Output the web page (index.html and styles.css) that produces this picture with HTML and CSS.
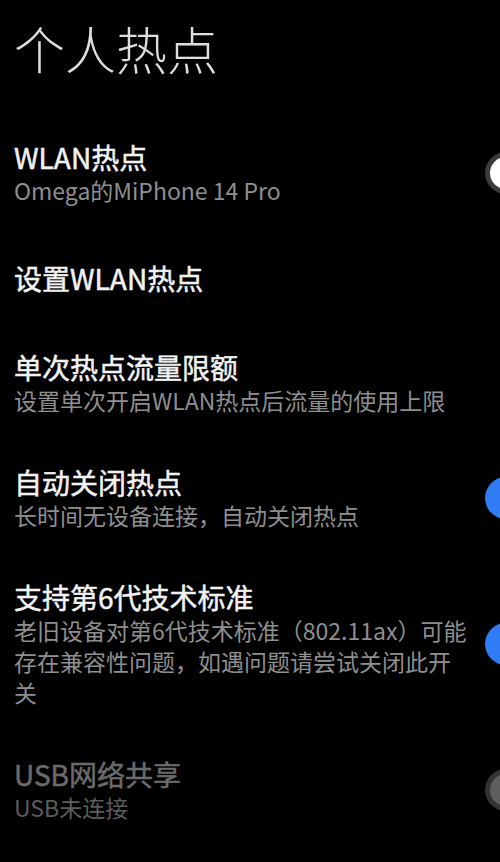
FILE: index.html
```html
<!DOCTYPE html>
<html lang="zh-CN">
<head>
<meta charset="utf-8">
<title>个人热点</title>
<link rel="stylesheet" href="styles.css">
</head>
<body>
<div class="page">
  <h1 class="header">个人热点</h1>
  <div class="list">
    <div class="item">
      <div class="text">
        <div class="title">WLAN热点</div>
        <div class="sub">Omega的MiPhone 14 Pro</div>
      </div>
      <div class="switch off"><span class="knob"></span></div>
    </div>
    <div class="item single">
      <div class="text">
        <div class="title">设置WLAN热点</div>
      </div>
    </div>
    <div class="item">
      <div class="text">
        <div class="title">单次热点流量限额</div>
        <div class="sub">设置单次开启WLAN热点后流量的使用上限</div>
      </div>
    </div>
    <div class="item">
      <div class="text">
        <div class="title">自动关闭热点</div>
        <div class="sub">长时间无设备连接，自动关闭热点</div>
      </div>
      <div class="switch on"><span class="knob"></span></div>
    </div>
    <div class="item">
      <div class="text">
        <div class="title">支持第6代技术标准</div>
        <div class="sub">老旧设备对第6代技术标准（802.11ax）可能存在兼容性问题，如遇问题请尝试关闭此开关</div>
      </div>
      <div class="switch on"><span class="knob"></span></div>
    </div>
    <div class="item disabled">
      <div class="text">
        <div class="title">USB网络共享</div>
        <div class="sub">USB未连接</div>
      </div>
      <div class="switch off"><span class="knob"></span></div>
    </div>
  </div>
</div>
</body>
</html>
```
FILE: styles.css
```css
html, body {
  margin: 0;
  padding: 0;
  background: #000;
  height: 100%;
  overflow: hidden;
}
body {
  font-family: "Noto Sans CJK SC", "Noto Sans", sans-serif;
  color: #eeeeee;
}
.page {
  width: 500px;
  height: 862px;
  box-sizing: border-box;
  padding: 0 0 0 14px;
  overflow: hidden;
}
.header {
  margin: 0;
  padding: 13px 0 32px 0;
  font-size: 51px;
  line-height: 70px;
  font-weight: 300;
  color: #dedede;
  letter-spacing: 0;
}
.list {
  display: flex;
  flex-direction: column;
  overflow: hidden;
}
.item {
  display: flex;
  align-items: center;
  padding: 24px 0;
}
.item.single {
  padding: 0;
  min-height: 95px;
}
.text {
  width: 458px;
  flex: none;
}
.title {
  font-size: 28px;
  line-height: 36px;
  font-weight: 400;
  color: #f2f2f2;
  -webkit-text-stroke: 0.5px currentColor;
}
.sub {
  font-size: 23px;
  line-height: 31px;
  color: #8f8f8f;
}
.switch {
  flex: none;
  margin-left: 13px;
  width: 84px;
  height: 42px;
  border-radius: 21px;
  box-sizing: border-box;
  padding: 5px;
  display: flex;
}
.switch.off {
  background: #3b3b3b;
  justify-content: flex-start;
}
.switch.on {
  background: #2f7cf6;
  justify-content: flex-end;
}
.knob {
  width: 32px;
  height: 32px;
  border-radius: 50%;
  background: #ffffff;
}
.disabled .title {
  color: #6b6b6b;
}
.disabled .sub {
  color: #5c5c5c;
}
.disabled .switch.off {
  background: #333333;
}
.disabled .knob {
  background: #5e5e5e;
}
```
